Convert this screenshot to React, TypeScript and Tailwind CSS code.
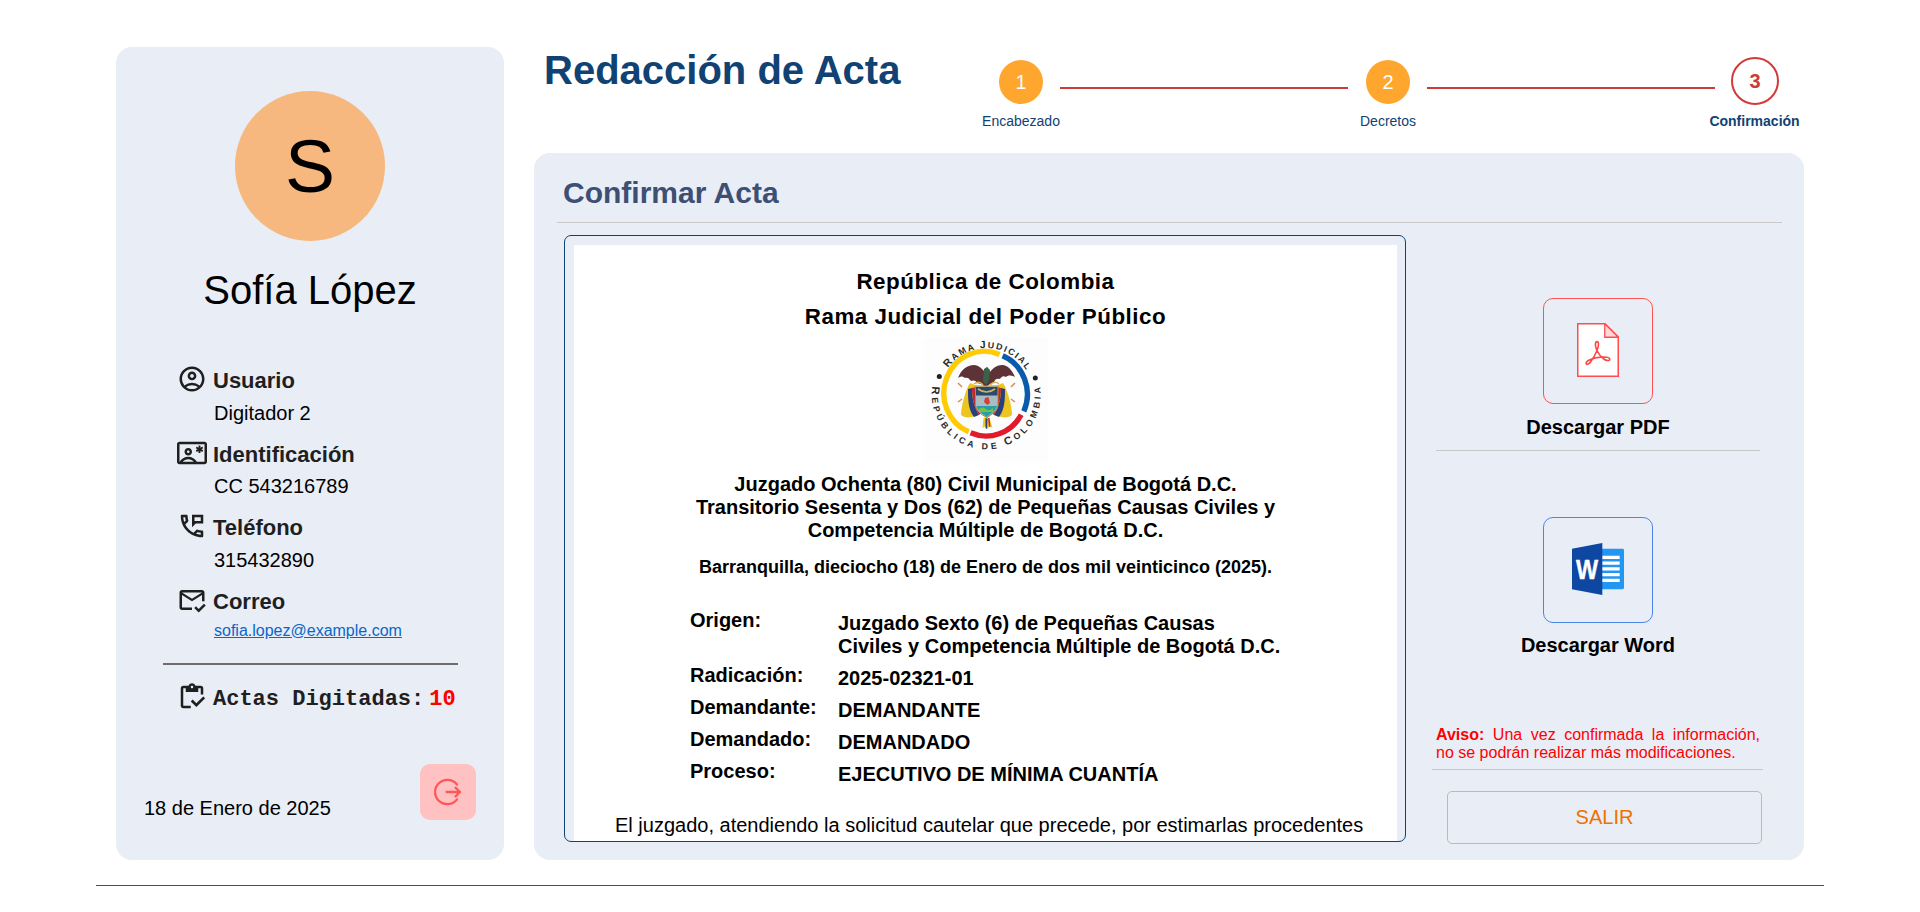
import type { ReactNode } from "react";
import {
  MdOutlineAccountCircle,
  MdOutlineContactEmergency,
  MdOutlinePermPhoneMsg,
  MdOutlineMarkEmailRead,
  MdOutlineInventory,
} from "react-icons/md";

function Field({ icon, label, children, small }: { icon: ReactNode; label: string; children: ReactNode; small?: boolean }) {
  return (
    <div className="h-[73.5px] pl-[61px]">
      <div className="flex h-[30px] items-start text-[#1f1f1f]">
        {icon}
        <span className="ml-[6px] pt-[4px] text-[22px] leading-[25px] font-bold">{label}</span>
      </div>
      <div className={small ? "pl-[37px] pt-[7px] text-[16px] leading-[18px]" : "pl-[37px] pt-[7.5px] text-[20px] leading-[23px] text-black"}>{children}</div>
    </div>
  );
}

function Step({ n, label, current }: { n: number; label: string; current?: boolean }) {
  return (
    <div className="flex w-[80px] flex-col items-center">
      {current ? (
        <div className="mt-[-3px] flex h-[48px] w-[48px] shrink-0 items-center justify-center rounded-full border-2 border-[#d23a3a] text-[20px] font-bold text-[#cb3b39]">{n}</div>
      ) : (
        <div className="flex h-[44px] w-[44px] shrink-0 items-center justify-center rounded-full bg-[#ffa62f] text-[20px] text-white">{n}</div>
      )}
      <div className={current ? "mt-[8px] -ml-px text-[14px] leading-[16px] font-bold whitespace-nowrap text-[#104273]" : "mt-[9px] text-[14px] leading-[16px] whitespace-nowrap text-[#104273]"}>{label}</div>
    </div>
  );
}

function Seal() {
  return (
    <svg className="h-[125px] w-[124px] bg-[#fdfdfd]" viewBox="923 338 124 125">
      <defs>
        <path id="arcTop" d="M 938.3 395 A 47 47 0 0 1 1032.3 395" />
        <path id="arcBottom" d="M 931.6 385.5 A 54.5 54.5 0 1 0 1039 385.5" />
      </defs>
      <g fill="none" strokeWidth="5.4">
        <path d="M 967.8 431.8 A 40.2 41.6 0 0 1 998.6 354.4" stroke="#ffcb05" />
        <path d="M 1001.6 355.8 A 40.2 41.6 0 0 1 1022.8 411.4" stroke="#0a5cab" />
        <path d="M 1020.2 414.8 A 40.2 41.6 0 0 1 969.6 432.8" stroke="#e21b2c" />
      </g>
      <circle cx="938.3" cy="376.4" r="2.5" fill="#222" />
      <circle cx="1034.3" cy="378" r="2.5" fill="#222" />
      <g fill="#2a2a2a" fontFamily="'Liberation Sans', sans-serif" fontWeight="700" fontSize="8.8">
        <text><textPath href="#arcTop" startOffset="29" textLength="92"><tspan fontSize="10.5">R</tspan>AMA <tspan fontSize="10.5">J</tspan>UDICIAL</textPath></text>
        <text><textPath href="#arcBottom" startOffset="1" textLength="187"><tspan fontSize="11">R</tspan>EPÚBLICA DE <tspan fontSize="11">C</tspan>OLOMBIA</textPath></text>
      </g>
      <path d="M969 383c-5 8-9 24-9 32 4 4 14 3 21-3V388Z" fill="#ecc520" />
      <path d="M1002 383c5 8 9 24 9 32-4 4-14 3-21-3V388Z" fill="#ecc520" />
      <path d="M967 389c0 10 0 20 6 28l5-2c-5-8-7-17-7-27ZM1004 389c0 10 0 20-6 28l-5-2c5-8 7-17 7-27Z" fill="#28407f" />
      <path d="M971 388c0 10 2 19 7 27l4-3-7-25ZM1000 388c0 10-2 19-7 27l-4-3 7-25Z" fill="#b92a33" />
      <path d="M957 378c3-8 9-13 16-13 5 0 8 4 11 7l2-5 3 5c3-4 7-7 12-7 6 0 10 5 13 12-4-2-7-2-9 0-3-2-5 0-6 2-3-1-5 0-6 3l-4 2-4 3-5-3-4-1c-1-3-4-3-6-2-2-3-4-4-6-3-2-2-4-2-7 0Z" fill="#5d3337" />
      <path d="M983 369l3-2 3 3-1 10-3 5-3-4Z" fill="#3c6149" />
      <path d="M974.500 386h22.500v18c0 7-5.500 9.500-11.200 14-6-4.500-11.300-7-11.300-14Z" fill="#a8bcc6" stroke="#b98d27" />
      <path d="M975 387h21.500v8.500H975Z" fill="#2b4a6b" />
      <path d="M975.500 406h20.500c-1.500 5-5.500 7-10.200 11-4.500-3.500-9-6-10.300-11Z" fill="#279fa6" />
      <path d="M978 409q4-3 7 0t7-1v4h-14Z" fill="#7bbf4a" />
      <path d="M984 398l3.500-1 1.500 6-2.500 2-3.500-3Z" fill="#d93c30" />
      <path d="M977 389q8.500 6 17 0M973 384q5-4 9 1M989 385q5-5 9-1" fill="none" stroke="#d6b256" strokeWidth="1.600" />
      <path d="M982.500 418l-1 10 3-2 2 3 2-3 3 2-3-10Z" fill="#efc81c" />
      <path d="M984.500 418v10l1.500 1 .5-10Z" fill="#28407f" />
      <path d="M987 418l1 9 1.500-.5-1-8.500Z" fill="#c2303a" />
      <path d="M957 383l4 4M957 402l4-3M1014 383l-4 4M1014 402l-4-3" stroke="#d98b52" strokeWidth="1.500" />
    </svg>
  );
}

function PdfIcon() {
  return (
    <svg className="mt-[24px] h-[54px] w-[42px]" viewBox="0 0 42 54">
      <path d="M.75.75H28L41.250 14V53.250H.75Z" fill="#fff" stroke="#ff4d4d" strokeWidth="1.500" />
      <path d="M27.750.75V14.250H41.250Z" fill="#ffd9dc" stroke="#ff4d4d" strokeWidth="1.300" />
      <path
        d="M20 18.600c2.200 0 1.600 5 .2 8.400-1.800 4.500-4.300 9-6.700 12-1.600 2-3.300 3-4.200 2-1-1.200.8-2.900 3-4 3.800-1.800 9.300-3 14-3 3.400 0 6.500.4 6.500 2.200 0 2-3.500 1.700-6-.2-3-2.200-5.800-6-7.200-9.200-1.400-3.400-1.800-8.200.4-8.200Z"
        fill="none"
        stroke="#ff4545"
        strokeWidth="1.600"
      />
    </svg>
  );
}

function WordIcon() {
  return (
    <svg className="mt-[25px] h-[52px] w-[52px]" viewBox="6 6 36 36">
      <path d="M41 10H25v28h16a1 1 0 0 0 1-1V11a1 1 0 0 0-1-1Z" fill="#2196f3" />
      <path d="M25 14.800h14v2.200H25ZM25 18.800h14v2.200H25ZM25 22.800h14v2.200H25ZM25 26.800h14v2.200H25ZM25 30.800h14v2.200H25Z" fill="#fff" />
      <path d="M27 42 6 38V10l21-4Z" fill="#0d47a1" />
      <text x="16.400" y="30.900" fill="#fff" stroke="#fff" strokeWidth=".3" textAnchor="middle" textLength="15.300" lengthAdjust="spacingAndGlyphs" fontSize="19.500" fontWeight="700" fontFamily="'Liberation Sans', sans-serif">W</text>
    </svg>
  );
}

function Row({ label, children }: { label: string; children: ReactNode }) {
  return (
    <div className="flex pb-[6px] text-[20px] leading-[23px] font-bold">
      <div className="w-[148px] shrink-0">{label}</div>
      <div className="pt-[3px]">{children}</div>
    </div>
  );
}

export default function App() {
  return (
    <div className="h-[912px] w-[1920px] overflow-hidden bg-white px-[96px] pt-[47px] font-['Liberation_Sans',Arial,sans-serif] text-black">
      <div className="flex h-[839px] border-b border-[#2f4f9f] pl-[20px]">
        <aside className="flex h-[813px] w-[388px] shrink-0 flex-col rounded-[16px] bg-[#e8edf6]">
          <div className="mt-[44px] flex h-[150px] w-[150px] items-center justify-center self-center rounded-full bg-[#f6b87e] text-[75px] leading-none">S</div>
          <h2 className="mt-[26px] text-center text-[40px] leading-[46px]">Sofía López</h2>
          <div className="mt-[51px]">
            <Field icon={<MdOutlineAccountCircle className="h-[30px] w-[30px]" />} label="Usuario">Digitador 2</Field>
            <Field icon={<MdOutlineContactEmergency className="h-[30px] w-[30px]" />} label="Identificación">CC 543216789</Field>
            <Field icon={<MdOutlinePermPhoneMsg className="h-[30px] w-[30px]" />} label="Teléfono">315432890</Field>
            <Field icon={<MdOutlineMarkEmailRead className="h-[30px] w-[30px]" />} label="Correo" small>
              <a className="text-[#0a66c8] underline">sofia.lopez@example.com</a>
            </Field>
          </div>
          <hr className="mx-[47px] mt-[5px] w-[295px] border-t-2 border-[#716b6e]" />
          <div className="mt-[17px] flex h-[30px] items-start pl-[61px] text-[22px] leading-[25px] font-bold whitespace-nowrap text-[#1f1f1f] font-['Courier_New','Liberation_Mono',monospace]">
            <MdOutlineInventory className="h-[30px] w-[30px] shrink-0" />
            <span className="ml-[6px] pt-[5px]">Actas Digitadas:</span>
            <span className="ml-[5px] pt-[5px] text-[#ff0000]">10</span>
          </div>
          <div className="mt-auto mb-[40px] flex h-[56px] items-start justify-between pr-[28px] pl-[28px]">
            <span className="pt-[33px] text-[20px] leading-[23px]">18 de Enero de 2025</span>
            <button className="flex h-[56px] w-[56px] items-center justify-center rounded-[10px] bg-[#ffc1c1]">
              <svg className="h-[30px] w-[30px]" viewBox="0 0 30 30" fill="none" stroke="#ff5757" strokeWidth="2.300" strokeLinecap="round" strokeLinejoin="round">
                <path d="M24 7.600A12.200 12.200 0 1 0 24 22.400M13.500 15H27M22.500 10.700 27 15 22.500 19.300" />
              </svg>
            </button>
          </div>
        </aside>

        <main className="ml-[30px] w-[1270px]">
          <div className="flex h-[106px]">
            <h1 className="w-[447px] pl-[10px] text-[40px] leading-[46px] font-bold text-[#104273]">Redacción de Acta</h1>
            <div className="flex pt-[13px]">
              <Step n={1} label="Encabezado" />
              <div className="mt-[27px] -ml-px h-[2px] w-[288px] bg-[#cb3b39]" />
              <Step n={2} label="Decretos" />
              <div className="mt-[27px] -ml-px h-[2px] w-[288px] bg-[#cb3b39]" />
              <Step n={3} label="Confirmación" current />
            </div>
          </div>

          <section className="h-[707px] rounded-[16px] bg-[#e8edf6] pt-[23px]">
            <h2 className="pl-[29px] text-[30px] leading-[34px] font-bold text-[#3d4f73]">Confirmar Acta</h2>
            <hr className="mt-[12px] ml-[23px] w-[1225px] border-t border-[#c9c9cb]" />
            <div className="mt-[12px] flex">
              <div className="ml-[30px] h-[607px] w-[842px] shrink-0 overflow-hidden rounded-[7px] border border-[#104273] pt-[9px] pr-[8px] pl-[9px]">
                <div className="flex h-[620px] flex-col bg-white">
                  <div className="pt-[19px] text-center text-[22.4px] leading-[35px] font-bold tracking-[0.5px]">
                    <p>República de Colombia</p>
                    <p>Rama Judicial del Poder Público</p>
                  </div>
                  <div className="mt-[4px] flex justify-center"><Seal /></div>
                  <p className="mt-[10px] text-center text-[20px] leading-[23px] font-bold">
                    Juzgado Ochenta (80) Civil Municipal de Bogotá D.C.
                    <br />
                    Transitorio Sesenta y Dos (62) de Pequeñas Causas Civiles y
                    <br />
                    Competencia Múltiple de Bogotá D.C.
                  </p>
                  <p className="mt-[15px] text-center text-[18px] leading-[21px] font-bold">Barranquilla, dieciocho (18) de Enero de dos mil veinticinco (2025).</p>
                  <div className="mt-[31px] pl-[116px]">
                    <Row label="Origen:">
                      Juzgado Sexto (6) de Pequeñas Causas
                      <br />
                      Civiles y Competencia Múltiple de Bogotá D.C.
                    </Row>
                    <Row label="Radicación:">2025-02321-01</Row>
                    <Row label="Demandante:">DEMANDANTE</Row>
                    <Row label="Demandado:">DEMANDADO</Row>
                    <Row label="Proceso:">EJECUTIVO DE MÍNIMA CUANTÍA</Row>
                  </div>
                  <p className="mt-[22px] pl-[41px] text-[20px] leading-[23px] whitespace-nowrap">El juzgado, atendiendo la solicitud cautelar que precede, por estimarlas procedentes</p>
                </div>
              </div>

              <div className="ml-[30px] flex w-[324px] flex-col items-center">
                <button className="mt-[63px] flex h-[106px] w-[110px] shrink-0 items-start justify-center rounded-[10px] border border-[#ff5252]"><PdfIcon /></button>
                <p className="mt-[12px] text-[20px] leading-[23px] font-bold">Descargar PDF</p>
                <hr className="mt-[11px] w-full border-t border-[#c6c8ca]" />
                <button className="mt-[66px] flex h-[106px] w-[110px] shrink-0 items-start justify-center rounded-[10px] border border-[#4a86ea]"><WordIcon /></button>
                <p className="mt-[11px] text-[20px] leading-[23px] font-bold">Descargar Word</p>
                <p className="mt-[69px] w-full text-justify text-[16px] leading-[18px] text-[#ff0000]">
                  <b>Aviso:</b> Una vez confirmada la información, no se podrán realizar más modificaciones.
                </p>
                <hr className="mt-[7px] -ml-px w-[331px] shrink-0 border-t border-[#c6c8ca]" />
                <button className="mt-[21px] -mr-[13px] h-[53px] w-[315px] shrink-0 rounded-[5px] border border-[#f0ab78] pb-[2px] text-[20px] text-[#ee7200]">SALIR</button>
              </div>
            </div>
          </section>
        </main>
      </div>
    </div>
  );
}
